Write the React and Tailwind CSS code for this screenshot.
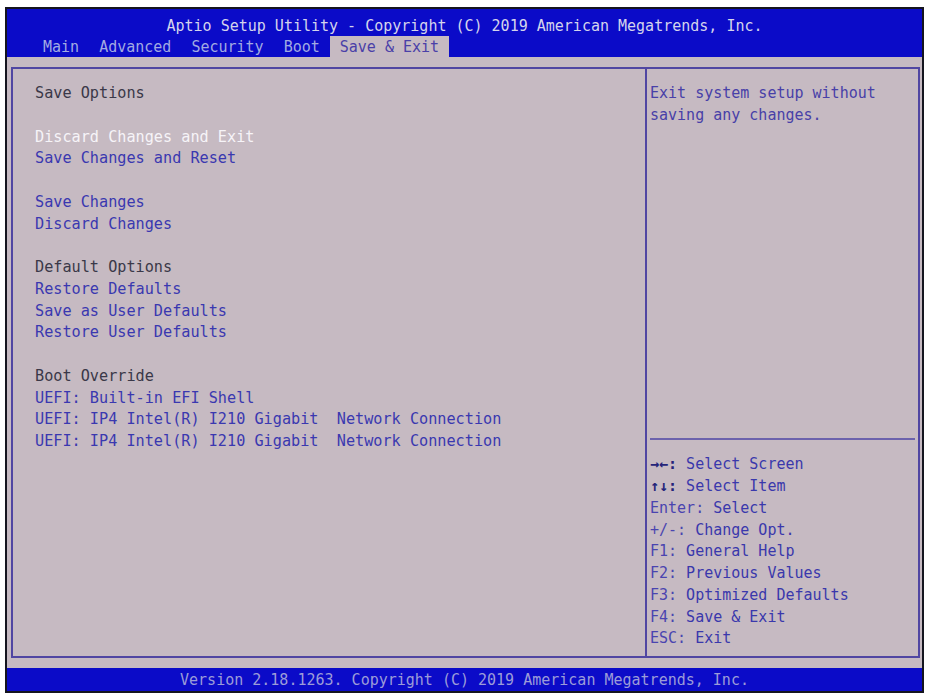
import React from "react";

const mono = { fontFamily: '"DejaVu Sans Mono", "Liberation Mono", monospace' };

const leftRows = [
  { t: "Save Options", k: "head" },
  { t: "", k: "blank" },
  { t: "Discard Changes and Exit", k: "sel" },
  { t: "Save Changes and Reset", k: "item" },
  { t: "", k: "blank" },
  { t: "Save Changes", k: "item" },
  { t: "Discard Changes", k: "item" },
  { t: "", k: "blank" },
  { t: "Default Options", k: "head" },
  { t: "Restore Defaults", k: "item" },
  { t: "Save as User Defaults", k: "item" },
  { t: "Restore User Defaults", k: "item" },
  { t: "", k: "blank" },
  { t: "Boot Override", k: "head" },
  { t: "UEFI: Built-in EFI Shell", k: "item" },
  { t: "UEFI: IP4 Intel(R) I210 Gigabit  Network Connection", k: "item" },
  { t: "UEFI: IP4 Intel(R) I210 Gigabit  Network Connection", k: "item" },
];

const keys = [
  ["→←:", " Select Screen"],
  ["↑↓:", " Select Item"],
  ["Enter:", " Select"],
  ["+/-:", " Change Opt."],
  ["F1:", " General Help"],
  ["F2:", " Previous Values"],
  ["F3:", " Optimized Defaults"],
  ["F4:", " Save & Exit"],
  ["ESC:", " Exit"],
];

const tabs = ["Main", "Advanced", "Security", "Boot", "Save & Exit"];

export default function App() {
  return (
    <div className="w-[926px] h-[698px] bg-white overflow-hidden" style={mono}>
      <div className="ml-[5px] mt-[7px] w-[919px] border-2 border-[#15151f] text-[15px]">
        {/* Header */}
        <div className="h-[48px] bg-[#0b0bc8] flex flex-col pt-[7px]">
          <div className="h-[20px] leading-[20px] text-center text-[#d4d4ec] whitespace-pre">
            Aptio Setup Utility - Copyright (C) 2019 American Megatrends, Inc.
          </div>
          <div className="flex h-[21px] pl-[26px]">
            {tabs.map((t) =>
              t === "Save & Exit" ? (
                <div key={t} className="h-[21px] pt-[2px] leading-[19px] px-[10px] bg-[#c6bac2] text-[#4a40a8] whitespace-pre">
                  {t}
                </div>
              ) : (
                <div key={t} className="h-[21px] pt-[2px] leading-[19px] px-[10px] text-[#a2aae2] whitespace-pre">
                  {t}
                </div>
              )
            )}
          </div>
        </div>

        {/* Body */}
        <div className="h-[611px] bg-[#c6bac2] pt-[10px] pb-[10px] pl-[4px] pr-[2px]">
          <div className="h-full border-2 border-[#5046a2] flex">
            <div className="w-[632px] pl-[22px] pt-[14px] text-[15.2px]">
              {leftRows.map((r, i) => (
                <div
                  key={i}
                  className={
                    "h-[21.75px] leading-[21.75px] whitespace-pre " +
                    (r.k === "head"
                      ? "text-[#3a3848]"
                      : r.k === "sel"
                      ? "text-[#f6f4f8]"
                      : "text-[#3a38b0]")
                  }
                >
                  {r.t}
                </div>
              ))}
            </div>
            <div className="flex-1 border-l-2 border-[#5046a2] flex flex-col">
              <div className="pt-[14px] pl-[3px] text-[#4840a8]">
                <div className="h-[21.75px] leading-[21.75px] whitespace-pre">Exit system setup without</div>
                <div className="h-[21.75px] leading-[21.75px] whitespace-pre">saving any changes.</div>
              </div>
              <div className="flex-1" />
              <div className="mx-[3px] h-[2px] bg-[#6c62ac]" />
              <div className="pt-[14px] pb-[6px] pl-[3px]">
                {keys.map(([k, v], i) => (
                  <div key={i} className="h-[21.75px] leading-[21.75px] whitespace-pre text-[#4a44b0]">
                    <span className={i < 2 ? "text-[#24247a] font-bold" : ""}>{k}</span>
                    <span className="text-[#3a38ac]">{v}</span>
                  </div>
                ))}
              </div>
            </div>
          </div>
        </div>

        {/* Footer */}
        <div className="h-[23px] pt-[2px] leading-[21px] bg-[#0b0bc8] text-center text-[#9c9cd8] whitespace-pre">
          Version 2.18.1263. Copyright (C) 2019 American Megatrends, Inc.
        </div>
      </div>
    </div>
  );
}
